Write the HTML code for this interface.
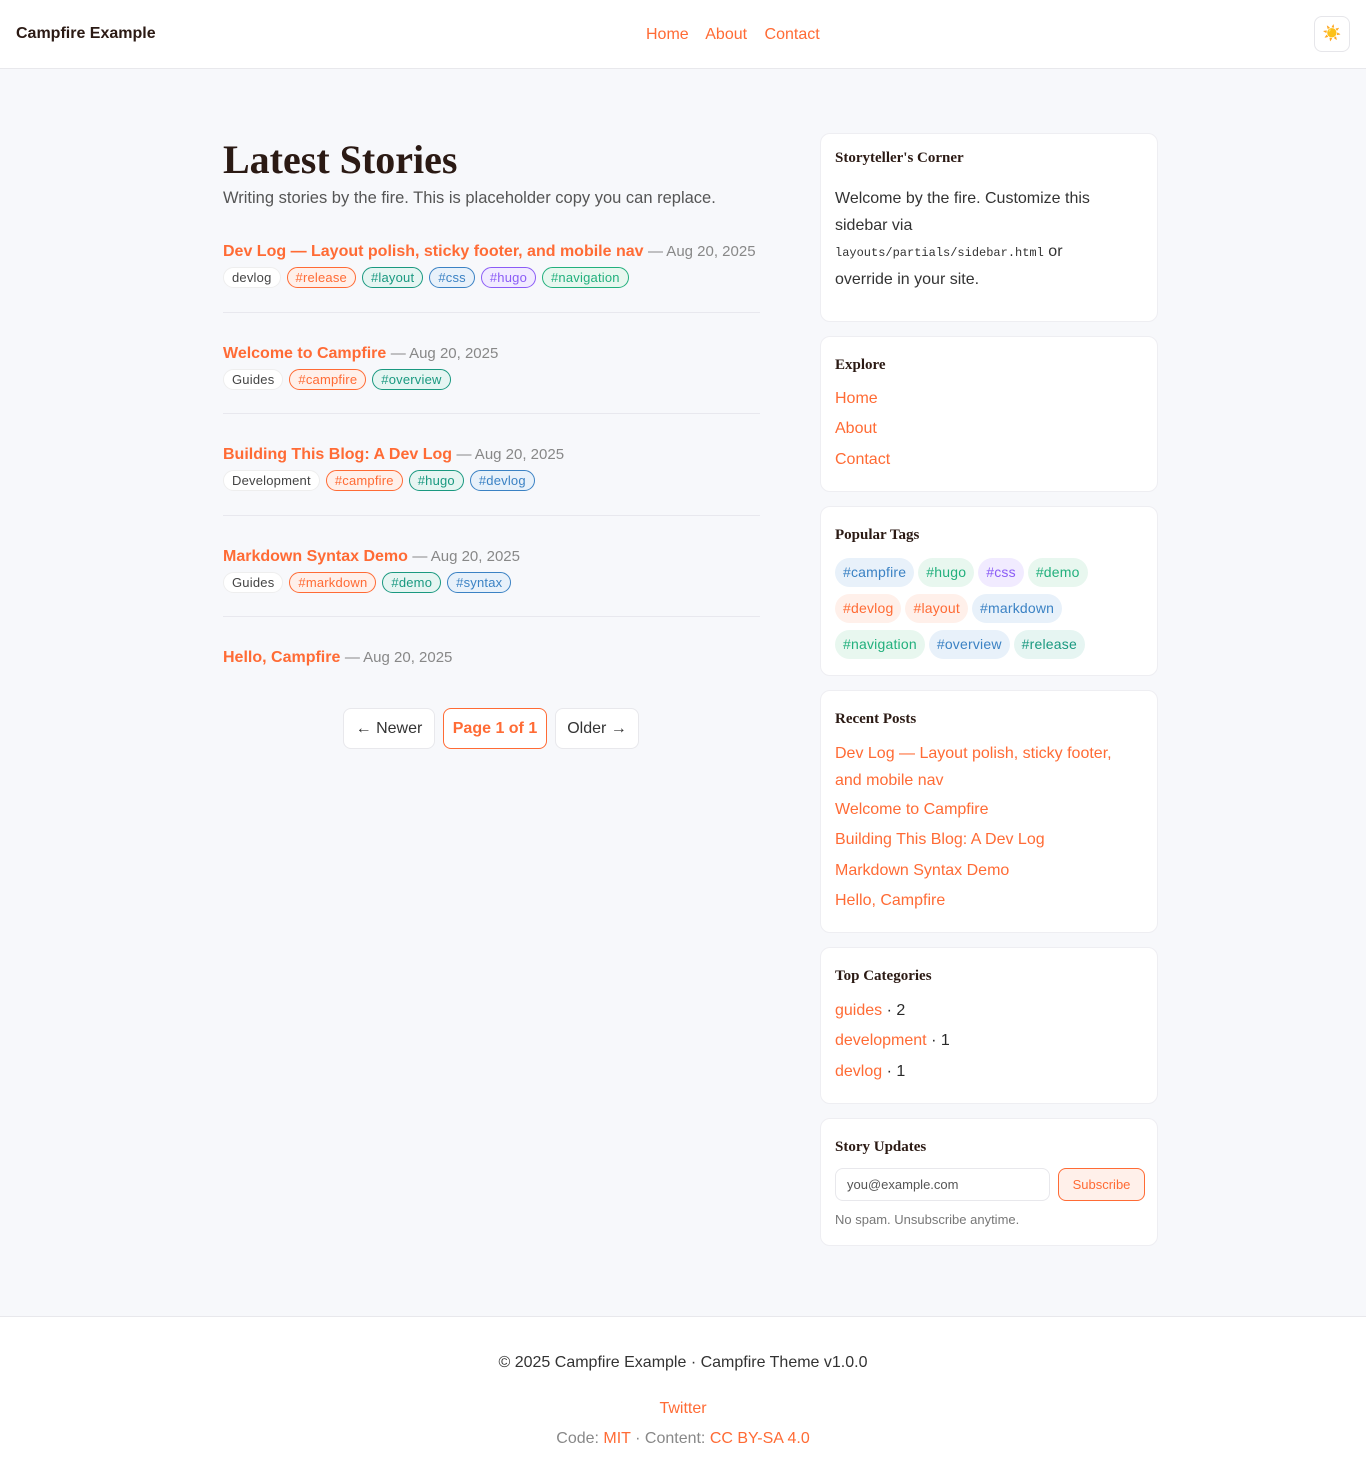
<!DOCTYPE html>
<html><head><meta charset="utf-8"><style>
*{box-sizing:border-box;margin:0;padding:0}
body{width:1366px;height:1468px;background:#f7f8fb;font-family:"Liberation Sans",sans-serif;color:#2a2a2a;position:relative;overflow:hidden}
a{color:#ff6b35;text-decoration:none}
.hdr{position:absolute;left:0;top:0;width:1366px;height:69px;background:#fff;border-bottom:1px solid #e8e8ec}
.brand{position:absolute;left:16px;top:25px;font-weight:bold;font-size:16px;color:#2b1a14}
.nav{position:absolute;left:646px;top:26px;font-size:16px}
.nav a{margin-right:13px}
.tog{position:absolute;left:1314px;top:16px;width:36px;height:36px;border:1px solid #e6e6ea;border-radius:8px;background:#fff;text-align:center;line-height:34px;font-size:15px}
.abs{position:absolute}
h1{position:absolute;left:223px;top:136px;font-family:"Liberation Serif",serif;font-size:40px;font-weight:bold;color:#2b1a14}
.sub{left:223px;top:189px;font-size:16.5px;color:#555}
.post{position:absolute;left:223px;width:537px}
.pt{font-size:16px;font-weight:bold;color:#ff6b35}
.dt{font-size:15px;color:#888}
.tags{margin-top:6px;display:flex;gap:6px}
.tg{font-size:13px;height:21px;line-height:19px;padding:0 8px;border-radius:11px;border:1px solid;letter-spacing:0.2px}
.c0{border-color:#eee;background:#fff;color:#444}
.o{border-color:#ff6b35;color:#ff6b35;background:#fff0ea}
.t{border-color:#1a9980;color:#1a9980;background:#e6f5f2}
.b{border-color:#3b82c4;color:#3b82c4;background:#e8f1fa}
.p{border-color:#8b5cf6;color:#8b5cf6;background:#f1ebff}
.g{border-color:#22b07d;color:#22b07d;background:#e8f7ef}
.hr{position:absolute;left:223px;width:537px;height:1px;background:#e8e8ee}
.btn{position:absolute;top:708px;height:41px;border:1px solid #e8e8ec;border-radius:8px;background:#fff;font-size:16px;line-height:39px;text-align:center;color:#333}
.card{position:absolute;left:820px;width:338px;background:#fff;border:1px solid #eeeef2;border-radius:10px;padding:0 14px}
.card h3{font-family:"Liberation Serif",serif;font-size:15px;font-weight:bold;color:#2b1a14;position:absolute;left:14px}
.lk{position:absolute;left:14px;font-size:16px}
.pill{display:inline-block;font-size:14px;height:29px;line-height:29px;padding:0 8px;border-radius:15px;margin:0 4px 7px 0;letter-spacing:0.2px}
.pb{background:#e8f1fa;color:#3b82c4}.pg{background:#e8f7ef;color:#22b07d}.pp{background:#f1ebff;color:#8b5cf6}.po{background:#fff0ea;color:#ff6b35}.pt2{background:#e6f5f2;color:#1a9980}
.ft{position:absolute;left:0;top:1316px;width:1366px;height:152px;background:#fff;border-top:1px solid #e8e8ec;text-align:center;font-size:16px}
</style></head><body>
<div class="hdr"><div class="brand">Campfire Example</div>
<div class="nav"><a>Home</a> <a>About</a> <a>Contact</a></div>
<div class="tog">☀️</div></div>

<h1>Latest Stories</h1>
<div class="abs sub">Writing stories by the fire. This is placeholder copy you can replace.</div>

<div class="post" style="top:243px"><span class="pt">Dev Log — Layout polish, sticky footer, and mobile nav</span> <span class="dt">— Aug 20, 2025</span>
<div class="tags"><span class="tg c0">devlog</span><span class="tg o">#release</span><span class="tg t">#layout</span><span class="tg b">#css</span><span class="tg p">#hugo</span><span class="tg g">#navigation</span></div></div>
<div class="hr" style="top:312px"></div>
<div class="post" style="top:345px"><span class="pt">Welcome to Campfire</span> <span class="dt">— Aug 20, 2025</span>
<div class="tags"><span class="tg c0">Guides</span><span class="tg o">#campfire</span><span class="tg t">#overview</span></div></div>
<div class="hr" style="top:413px"></div>
<div class="post" style="top:446px"><span class="pt">Building This Blog: A Dev Log</span> <span class="dt">— Aug 20, 2025</span>
<div class="tags"><span class="tg c0">Development</span><span class="tg o">#campfire</span><span class="tg t">#hugo</span><span class="tg b">#devlog</span></div></div>
<div class="hr" style="top:515px"></div>
<div class="post" style="top:548px"><span class="pt">Markdown Syntax Demo</span> <span class="dt">— Aug 20, 2025</span>
<div class="tags"><span class="tg c0">Guides</span><span class="tg o">#markdown</span><span class="tg t">#demo</span><span class="tg b">#syntax</span></div></div>
<div class="hr" style="top:616px"></div>
<div class="post" style="top:649px"><span class="pt">Hello, Campfire</span> <span class="dt">— Aug 20, 2025</span></div>

<div class="btn" style="left:343px;width:92px">← Newer</div>
<div class="btn" style="left:443px;width:104px;border-color:#ff6b35;color:#ff6b35;font-weight:bold">Page 1 of 1</div>
<div class="btn" style="left:555px;width:84px">Older →</div>

<div class="card" style="top:133px;height:189px"><h3 style="top:16px">Storyteller's Corner</h3>
<div class="abs" style="left:14px;top:52px;width:285px;font-size:16px;line-height:26.5px;color:#333">Welcome by the fire. Customize this sidebar via <span style="font-family:'Liberation Mono',monospace;font-size:12px">layouts/partials/sidebar.html</span> or override in your site.</div></div>

<div class="card" style="top:336px;height:156px"><h3 style="top:20px">Explore</h3>
<a class="lk" style="top:53px">Home</a><a class="lk" style="top:83px">About</a><a class="lk" style="top:114px">Contact</a></div>

<div class="card" style="top:506px;height:170px"><h3 style="top:20px">Popular Tags</h3>
<div class="abs" style="left:14px;top:51px;width:310px"><span class="pill pb">#campfire</span><span class="pill pg">#hugo</span><span class="pill pp">#css</span><span class="pill pg">#demo</span><span class="pill po">#devlog</span><span class="pill po">#layout</span><span class="pill pb">#markdown</span><span class="pill pg">#navigation</span><span class="pill pb">#overview</span><span class="pill pt2">#release</span></div></div>

<div class="card" style="top:690px;height:243px"><h3 style="top:20px">Recent Posts</h3>
<div class="abs" style="left:14px;top:49px;width:295px;font-size:16px;line-height:27px"><a>Dev Log — Layout polish, sticky footer, and mobile nav</a></div>
<a class="lk" style="top:110px">Welcome to Campfire</a><a class="lk" style="top:140px">Building This Blog: A Dev Log</a><a class="lk" style="top:171px">Markdown Syntax Demo</a><a class="lk" style="top:201px">Hello, Campfire</a></div>

<div class="card" style="top:947px;height:157px"><h3 style="top:20px">Top Categories</h3>
<div class="lk" style="top:54px"><a>guides</a> · 2</div><div class="lk" style="top:84px"><a>development</a> · 1</div><div class="lk" style="top:115px"><a>devlog</a> · 1</div></div>

<div class="card" style="top:1118px;height:128px"><h3 style="top:20px">Story Updates</h3>
<div class="abs" style="left:14px;top:49px;width:215px;height:33px;border:1px solid #e8e8ec;border-radius:8px;font-size:13px;line-height:31px;padding-left:11px;color:#555">you@example.com</div>
<div class="abs" style="left:237px;top:49px;width:87px;height:33px;border:1px solid #ff6b35;border-radius:8px;background:#fff0ea;font-size:13px;line-height:31px;text-align:center;color:#ff6b35">Subscribe</div>
<div class="abs" style="left:14px;top:93px;font-size:13px;color:#777">No spam. Unsubscribe anytime.</div></div>

<div class="ft"><div style="position:absolute;width:100%;top:37px;color:#333">© 2025 Campfire Example · Campfire Theme v1.0.0</div>
<div style="position:absolute;width:100%;top:83px"><a>Twitter</a></div>
<div style="position:absolute;width:100%;top:113px;color:#888">Code: <a>MIT</a> · Content: <a>CC BY-SA 4.0</a></div></div>
</body></html>
